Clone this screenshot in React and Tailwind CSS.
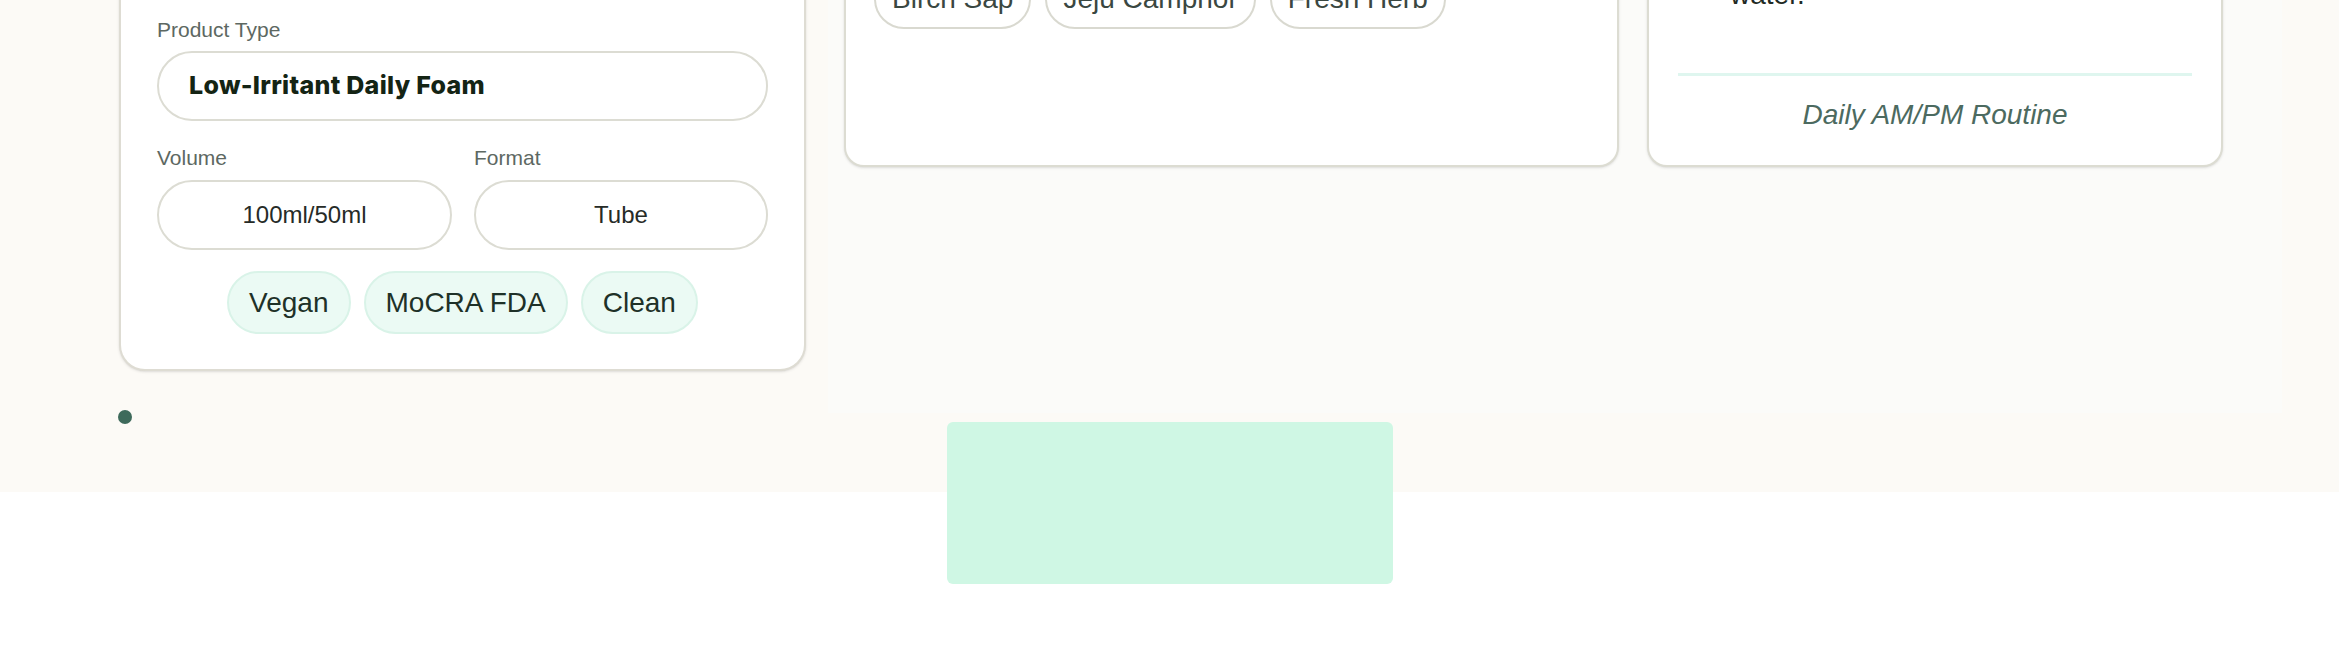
import React from "react";

const sans = { fontFamily: '"Liberation Sans", Arial, sans-serif' };

function Field({ label, value, className = "" }) {
  return (
    <div className={className}>
      <div className="text-[21px] leading-[24px] text-[#5d6862] mb-[10px]">{label}</div>
      <div className="h-[70px] rounded-full border-2 border-[#dcdcd3] bg-white flex items-center justify-center text-[24px] text-[#262b27]">
        {value}
      </div>
    </div>
  );
}

export default function App() {
  const certs = ["Vegan", "MoCRA FDA", "Clean"];
  const notes = ["Birch Sap", "Jeju Camphor", "Fresh Herb"];

  return (
    <div className="relative w-[2339px] h-[654px] overflow-hidden bg-white" style={sans}>
      {/* cream band */}
      <div className="h-[492px] bg-[#fcfaf6] flex items-start">
        {/* left column: product card */}
        <div className="ml-[119px] w-[687px] flex flex-col">
          <div className="-mt-[20px] rounded-b-[26px] border-2 border-t-0 border-[#dedcd3] bg-white px-[36px] pt-[38px] pb-[35px] shadow-sm">
            <div className="text-[21px] leading-[24px] text-[#5d6862] mb-[9px]">Product Type</div>
            <div className="h-[70px] rounded-full border-2 border-[#dcdcd3] bg-white flex items-center px-[30px]">
              <span className="text-[25px] font-extrabold tracking-[0.3px] text-[#142414]" style={{ fontFamily: "Inter, sans-serif" }}>
                Low-Irritant Daily Foam
              </span>
            </div>

            <div className="mt-[25px] flex gap-[22px]">
              <Field label="Volume" value="100ml/50ml" className="w-[295px]" />
              <Field label="Format" value="Tube" className="flex-1" />
            </div>

            <div className="mt-[21px] flex justify-center gap-[13px]">
              {certs.map((c) => (
                <span
                  key={c}
                  className="h-[63px] px-[20px] rounded-full border-2 border-[#d9f3e8] bg-[#ebfaf4] flex items-center text-[28px] text-[#1e3128]"
                >
                  {c}
                </span>
              ))}
            </div>
          </div>

          <span className="mt-[39px] -ml-[1px] w-[14px] h-[14px] rounded-full bg-[#3e6a5b]" />
        </div>

        {/* right area: faint panel holding two cards */}
        <div className="ml-[22px] w-[1454px] h-[413px] bg-[#fbfbf9] flex items-start gap-[28px] pl-[16px]">
          <div className="-mt-[40px] w-[775px] h-[207px] rounded-b-[20px] border-2 border-t-0 border-[#dcdcd2] bg-white shadow-sm pt-[9px] pl-[28px]">
            <div className="flex gap-[14px]">
              {notes.map((n) => (
                <span
                  key={n}
                  className="h-[60px] px-[16px] rounded-full border-2 border-[#d9d9d0] bg-white flex items-center text-[28px] text-[#3a4741]"
                >
                  {n}
                </span>
              ))}
            </div>
          </div>

          <div className="-mt-[40px] w-[576px] h-[207px] rounded-b-[20px] border-2 border-t-0 border-[#dcdcd2] bg-white shadow-sm flex flex-col pt-[17px] px-[29px]">
            <div className="pl-[52px] text-[28px] leading-[36px] text-[#1f2a24]">water.</div>
            <div className="mt-[60px] h-[3px] bg-[#dff6ef]" />
            <div className="mt-[22px] text-center italic text-[28px] leading-[34px] text-[#4c6a60]">
              Daily AM/PM Routine
            </div>
          </div>
        </div>
      </div>

      {/* mint block over the band edge */}
      <div className="absolute left-[947px] top-[422px] w-[446px] h-[162px] rounded-md bg-[#cff7e4]" />
    </div>
  );
}
